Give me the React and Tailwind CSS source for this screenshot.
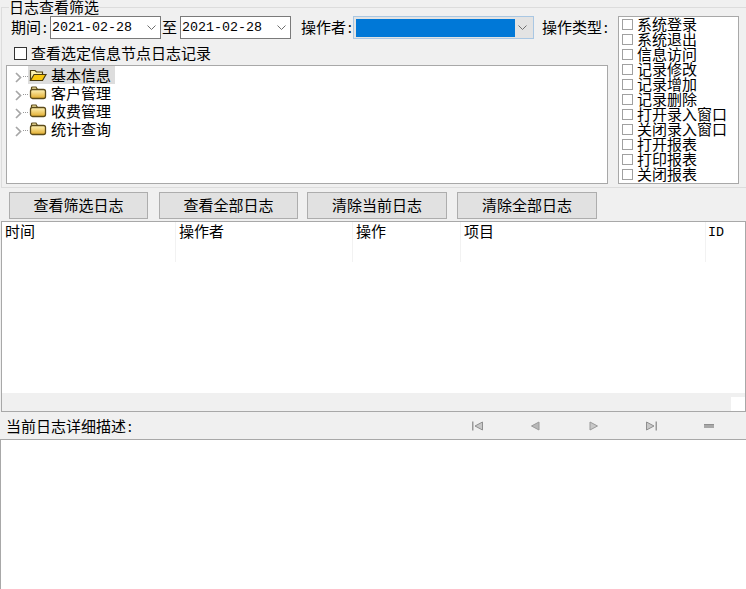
const font = { fontFamily: '"Noto Sans CJK SC", "Liberation Sans", sans-serif' };

const Chevron = () => (
  <svg width="9" height="6" viewBox="0 0 9 6" className="shrink-0">
    <path d="M0.5 0.5 L4.5 4.5 L8.5 0.5" fill="none" stroke="#6e6e6e" strokeWidth="1" />
  </svg>
);

const TreeArrow = () => (
  <svg width="7" height="11" viewBox="0 0 7 11" className="shrink-0 translate-y-[2px]">
    <path d="M1 1 L5.5 5.5 L1 10" fill="none" stroke="#a6a6a6" strokeWidth="1.7" />
  </svg>
);

const Folder = ({ open }) => (
  <svg width="18" height="14" viewBox="0 0 18 14" className="shrink-0">
    <defs>
      <linearGradient id="fg" x1="0" y1="0" x2="0" y2="1">
        <stop offset="0" stopColor="#fff3b8" />
        <stop offset="1" stopColor="#e2ac2c" />
      </linearGradient>
    </defs>
    {open ? (
      <>
        <path d="M1.5 12.5 V2.5 H6 L7.5 4 H13.5 V6" fill="#fdf3b0" stroke="#4a3c10" strokeWidth="1.2" />
        <path d="M1.5 12.5 L5 6.5 H17 L13.5 12.5 Z" fill="#f8c70f" stroke="#4a3c10" strokeWidth="1.2" />
      </>
    ) : (
      <>
        <path d="M2.5 3.5 V2 Q2.5 1 3.5 1 H7 L8.5 3.5" fill="#f8e8a0" stroke="#5c4b1a" strokeWidth="1.2" />
        <rect x="1.5" y="3.5" width="15" height="9" rx="2" fill="url(#fg)" stroke="#5c4b1a" strokeWidth="1.3" />
      </>
    )}
  </svg>
);

const Colon = () => <span className="inline-block w-[7.5px] text-center">:</span>;

const DateBox = () => (
  <div className="w-[111px] h-[23px] bg-white border border-[#7a7a7a] flex items-center justify-between pl-[1px] pr-[4px] shrink-0">
    <span className="text-[13.33px] leading-none text-black" style={{ fontFamily: '"Liberation Mono", monospace' }}>2021-02-28</span>
    <Chevron />
  </div>
);

const treeItems = ['基本信息', '客户管理', '收费管理', '统计查询'];
const opItems = ['系统登录', '系统退出', '信息访问', '记录修改', '记录增加', '记录删除', '打开录入窗口', '关闭录入窗口', '打开报表', '打印报表', '关闭报表'];
const buttons = [
  ['查看筛选日志', 'w-[139px]', 'mr-[11px]'],
  ['查看全部日志', 'w-[139px]', 'mr-[9px]'],
  ['清除当前日志', 'w-[140px]', 'mr-[10px]'],
  ['清除全部日志', 'w-[140px]', ''],
];
const columns = [
  ['时间', 'w-[174px]'],
  ['操作者', 'w-[177px]'],
  ['操作', 'w-[108px]'],
  ['项目', 'w-[245px]'],
];

const NavIcon = ({ children }) => (
  <svg width="14" height="10" viewBox="0 0 14 10" className="shrink-0">{children}</svg>
);

export default function App() {
  return (
    <div className="w-[746px] h-[589px] bg-[#f0f0f0] overflow-hidden flex flex-col text-[15px] text-black" style={font}>
      {/* filter group */}
      <div className="relative ml-[1px] mt-[7px] h-[181px] shrink-0 border border-r-0 border-[#dcdcdc] pl-[4px] pt-[8px]">
        <span className="absolute left-[7px] -top-[9px] leading-[16px] bg-[#f0f0f0]">日志查看筛选</span>
        <div className="flex">
          <div className="w-[602px] shrink-0 flex flex-col">
            <div className="flex items-center h-[23px]">
              <span className="ml-[5px] w-[39px] shrink-0 whitespace-nowrap">期间<Colon /></span>
              <DateBox />
              <span className="w-[19px] shrink-0 pl-[1px]">至</span>
              <DateBox />
              <span className="ml-[10px] w-[52px] shrink-0 whitespace-nowrap">操作者<Colon /></span>
              <div className="w-[181px] h-[23px] bg-[#e3e3e3] border border-[#a9c7e3] flex items-center shrink-0">
                <div className="w-[159px] h-[18px] ml-[2px] bg-[#0078d7]" />
                <div className="ml-[3px]"><Chevron /></div>
              </div>
              <span className="ml-[8px] shrink-0 whitespace-nowrap">操作类型<Colon /></span>
            </div>
            <label className="flex items-center h-[15px] mt-[7px] ml-[8px]">
              <span className="w-[13px] h-[13px] bg-white border border-[#333] mr-[4px] shrink-0" />
              <span className="whitespace-nowrap">查看选定信息节点日志记录</span>
            </label>
            <div className="mt-[4px] h-[119px] bg-white border border-[#a8a8a8]">
              {treeItems.map((t, i) => (
                <div key={t} className="flex items-center h-[18px] pl-[8px] relative">
                  <TreeArrow />
                  <span className="w-[5px] ml-[1px] border-t border-dotted border-[#9a9a9a] translate-y-[1px]" />
                  <div className={`flex items-center h-[18px] w-[87px] pl-[1px] ${i === 0 ? 'bg-[#dddddd]' : ''}`}>
                    <Folder open={i === 0} />
                    <span className="ml-[4px] leading-[18px] whitespace-nowrap">{t}</span>
                  </div>
                </div>
              ))}
            </div>
          </div>
          <div className="ml-[10px] w-[121px] h-[168px] bg-white border border-[#a8a8a8] pl-[3px] overflow-hidden">
            {opItems.map((t) => (
              <div key={t} className="flex items-center h-[15px]">
                <span className="w-[11px] h-[11px] border border-[#a0a0a0] mr-[4px] shrink-0" />
                <span className="leading-[15px] whitespace-nowrap -translate-y-[1px]">{t}</span>
              </div>
            ))}
          </div>
        </div>
      </div>

      {/* buttons */}
      <div className="flex ml-[9px] mt-[4px] h-[27px] shrink-0">
        {buttons.map(([t, w, m]) => (
          <div key={t} className={`${w} ${m} h-[27px] bg-[#e1e1e1] border border-[#adadad] flex items-center justify-center`}>{t}</div>
        ))}
      </div>

      {/* list */}
      <div className="ml-[1px] mt-[2px] h-[191px] shrink-0 bg-white border border-[#a8a8a8] flex flex-col">
        <div className="flex h-[40px] shrink-0">
          {columns.map(([t, w]) => (
            <div key={t} className={`${w} h-[40px] border-r border-[#f2f2f2] pl-[3px] leading-[18px]`}>{t}</div>
          ))}
          <div className="pl-[2px] pt-[1px] leading-[20px] text-[13.33px]" style={{ fontFamily: '"Liberation Mono", monospace' }}>ID</div>
        </div>
        <div className="flex-1" />
        <div className="h-[18px] shrink-0 bg-[#f0f0f0] flex justify-end items-end">
          <div className="w-[14px] h-[14px] bg-white" />
        </div>
      </div>

      {/* detail header */}
      <div className="h-[27px] shrink-0 flex items-center">
        <span className="ml-[6px] w-[465px] pt-[1px] whitespace-nowrap">当前日志详细描述<Colon /></span>
        <div className="flex items-center">
          <div className="w-[14px] mr-[43px]">
            <NavIcon>
              <rect x="1" y="0.5" width="1.5" height="9" fill="#9a9a9a" />
              <path d="M11.5 1 V9 L4 5 Z" fill="#c8c8c8" stroke="#8f8f8f" />
            </NavIcon>
          </div>
          <div className="w-[14px] mr-[45px]">
            <NavIcon>
              <path d="M11 1 V9 L3.5 5 Z" fill="#b8b8b8" stroke="#9a9a9a" />
            </NavIcon>
          </div>
          <div className="w-[14px] mr-[44px]">
            <NavIcon>
              <path d="M3 1 V9 L10.5 5 Z" fill="#c8c8c8" stroke="#9a9a9a" />
            </NavIcon>
          </div>
          <div className="w-[14px] mr-[43px]">
            <NavIcon>
              <path d="M1.5 1 V9 L9 5 Z" fill="#c8c8c8" stroke="#8f8f8f" />
              <rect x="10.5" y="0.5" width="1.5" height="9" fill="#9a9a9a" />
            </NavIcon>
          </div>
          <div className="w-[14px]">
            <NavIcon>
              <rect x="2" y="3" width="10" height="4" fill="#a8a8a8" />
              <rect x="2" y="3" width="10" height="1" fill="#8f8f8f" />
            </NavIcon>
          </div>
        </div>
      </div>

      {/* detail box */}
      <div className="flex-1 bg-white border-t border-l border-[#a8a8a8]" />
    </div>
  );
}
